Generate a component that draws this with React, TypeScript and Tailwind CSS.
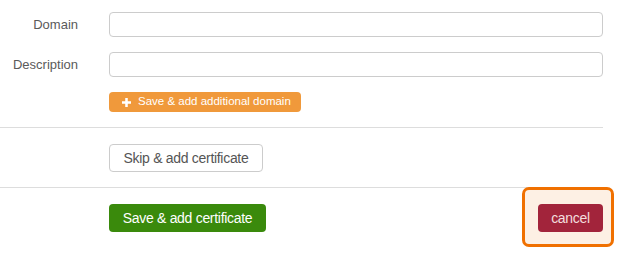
export default function App() {
  return (
    <div className="w-[617px] h-[264px] bg-white text-[#555] font-['Liberation_Sans',Arial,sans-serif] overflow-hidden">
      <div className="w-[603px] pt-[12px]">
        {/* Fields */}
        <div className="flex items-center h-[25px]">
          <label className="w-[78px] text-right text-[13px] text-[#5a5a5a]">Domain</label>
          <input className="ml-[31px] flex-1 h-[25px] border border-[#ccc] rounded-[4px] bg-white" />
        </div>
        <div className="flex items-center h-[25px] mt-[15px]">
          <label className="w-[78px] text-right text-[13px] text-[#5a5a5a]">Description</label>
          <input className="ml-[31px] flex-1 h-[25px] border border-[#ccc] rounded-[4px] bg-white" />
        </div>
        <div className="pl-[109px] mt-[15px]">
          <button className="h-[20px] w-[192px] rounded-[4px] bg-[#f0993b] text-white text-[11.5px] flex items-center pl-[13px] gap-[7px]">
            <svg width="9" height="9" viewBox="0 0 10 10" className="shrink-0">
              <path d="M3.6 0h2.8v3.6H10v2.8H6.4V10H3.6V6.4H0V3.6h3.6z" fill="#fff" />
            </svg>
            Save &amp; add additional domain
          </button>
        </div>

        <div className="mt-[15px] border-t border-[#ddd]" />

        <div className="pl-[109px] pt-[16px] pb-[15px]">
          <button className="h-[28px] w-[154px] rounded-[4px] border border-[#ccc] bg-white text-[#555] text-[14px] tracking-[-0.3px]">
            Skip &amp; add certificate
          </button>
        </div>

        <div className="border-t border-[#ddd]" />

        <div className="flex items-center justify-between pl-[109px] pt-[16px]">
          <button className="h-[28px] w-[157px] rounded-[4px] bg-[#3a8a0c] text-white text-[14px] tracking-[-0.3px]">
            Save &amp; add certificate
          </button>
          <div className="relative">
            <div className="absolute left-[-16px] right-[-11px] top-[-17px] bottom-[-15px] rounded-[7px] border-[3px] border-[#f07000] bg-[#fdf0e4]" />
            <button className="relative h-[28px] w-[65px] rounded-[4px] bg-[#a2243b] text-[#f3dede] text-[14px] tracking-[-0.3px]">
              cancel
            </button>
          </div>
        </div>
      </div>
    </div>
  )
}
